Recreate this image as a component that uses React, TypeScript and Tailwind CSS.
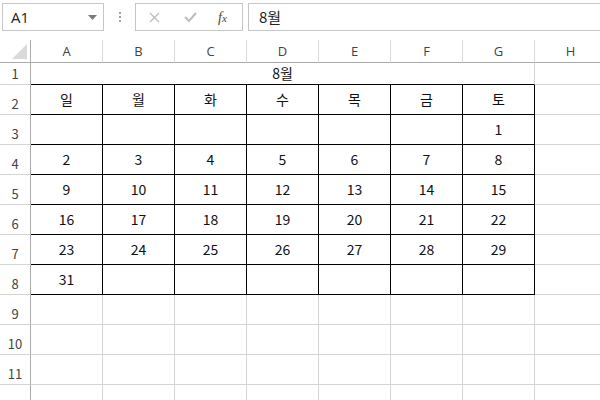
const cols = ["A", "B", "C", "D", "E", "F", "G", "H"];

const weeks: (number | null)[][] = [
  [null, null, null, null, null, null, 1],
  [2, 3, 4, 5, 6, 7, 8],
  [9, 10, 11, 12, 13, 14, 15],
  [16, 17, 18, 19, 20, 21, 22],
  [23, 24, 25, 26, 27, 28, 29],
  [31, null, null, null, null, null, null],
];

const days = ["일", "월", "화", "수", "목", "금", "토"];

function RowHead({ n, h }: { n?: number; h: string }) {
  return (
    <div
      className={`${h} flex items-end justify-center border-r border-b border-r-[#ababab] border-b-[#d4d4d4] pb-[4px] text-[13px] leading-none text-[#444]`}
    >
      {n}
    </div>
  );
}

export default function App() {
  const tableRows: (string | number | null)[][] = [days, ...weeks];

  return (
    <div
      className="h-[400px] w-[600px] overflow-hidden bg-white"
      style={{ fontFamily: '"Noto Sans CJK KR", "Noto Sans", sans-serif' }}
    >
      {/* formula bar */}
      <div className="flex h-[40px] items-start pt-[3px]">
        <div className="ml-[2px] flex h-[28px] w-[102px] items-center border border-[#c6c6c6] pl-[8px] pr-[6px]">
          <span className="flex-1 text-[15px] text-[#222]" style={{ fontFamily: '"Open Sans", sans-serif' }}>
            A1
          </span>
          <svg width="9" height="5" viewBox="0 0 9 5">
            <path d="M0 0h9L4.5 5z" fill="#7a7a7a" />
          </svg>
        </div>
        <div className="flex h-[28px] w-[31px] flex-col items-center justify-center gap-[2px]">
          <span className="h-[2px] w-[2px] bg-[#a0a0a0]" />
          <span className="h-[2px] w-[2px] bg-[#a0a0a0]" />
          <span className="h-[2px] w-[2px] bg-[#a0a0a0]" />
        </div>
        <div className="flex h-[28px] w-[108px] items-center border border-[#c6c6c6]">
          <svg className="ml-[13px]" width="11" height="11" viewBox="0 0 11 11">
            <path d="M1 1l9 9M10 1l-9 9" stroke="#bcbcbc" strokeWidth="1.3" />
          </svg>
          <svg className="ml-[24px]" width="13" height="10" viewBox="0 0 13 10">
            <path d="M1 5l4 4 7-8" stroke="#bcbcbc" strokeWidth="2" fill="none" />
          </svg>
          <span
            className="ml-[21px] text-[14px] italic text-[#444]"
            style={{ fontFamily: '"Liberation Serif", serif' }}
          >
            f<span className="text-[11px]">x</span>
          </span>
        </div>
        <div className="ml-[5px] flex h-[28px] flex-1 items-center border border-r-0 border-[#c6c6c6] pl-[10px] text-[15px] text-[#222]">
          8월
        </div>
      </div>

      {/* sheet */}
      <div className="grid grid-cols-[31px_repeat(8,72px)] text-[14px] text-[#111]">
        {/* column headers */}
        <div className="relative h-[23px] border-r border-b border-[#ababab]">
          <svg className="absolute right-[3px] bottom-[3px]" width="15" height="15" viewBox="0 0 15 15">
            <path d="M15 0V15H0z" fill="#dadada" />
          </svg>
        </div>
        {cols.map((c) => (
          <div
            key={c}
            className="flex h-[23px] items-center justify-center border-r border-b border-r-[#dadada] border-b-[#ababab] pt-[1px] text-[13px] text-[#444]"
            style={{ fontFamily: '"Open Sans", sans-serif' }}
          >
            {c}
          </div>
        ))}

        {/* row 1 */}
        <RowHead n={1} h="h-[22px]" />
        <div className="col-span-7 flex h-[22px] items-center justify-center border-r border-b border-r-[#d4d4d4] border-b-black">
          8월
        </div>
        <div className="h-[22px] border-r border-b border-[#d4d4d4]" />

        {/* rows 2-8 */}
        {tableRows.map((row, ri) => (
          <div key={ri} className="contents">
            <RowHead n={ri + 2} h="h-[30px]" />
            {row.map((v, ci) => (
              <div
                key={ci}
                className="flex h-[30px] items-center justify-center border-r border-b border-black"
              >
                {v ?? ""}
              </div>
            ))}
            <div className="h-[30px] border-r border-b border-[#d4d4d4]" />
          </div>
        ))}

        {/* rows 9-12 */}
        {[9, 10, 11, 12].map((n) => (
          <div key={n} className="contents">
            <RowHead n={n < 12 ? n : undefined} h="h-[30px]" />
            {cols.map((c) => (
              <div key={c} className="h-[30px] border-r border-b border-[#d4d4d4]" />
            ))}
          </div>
        ))}
      </div>
    </div>
  );
}
